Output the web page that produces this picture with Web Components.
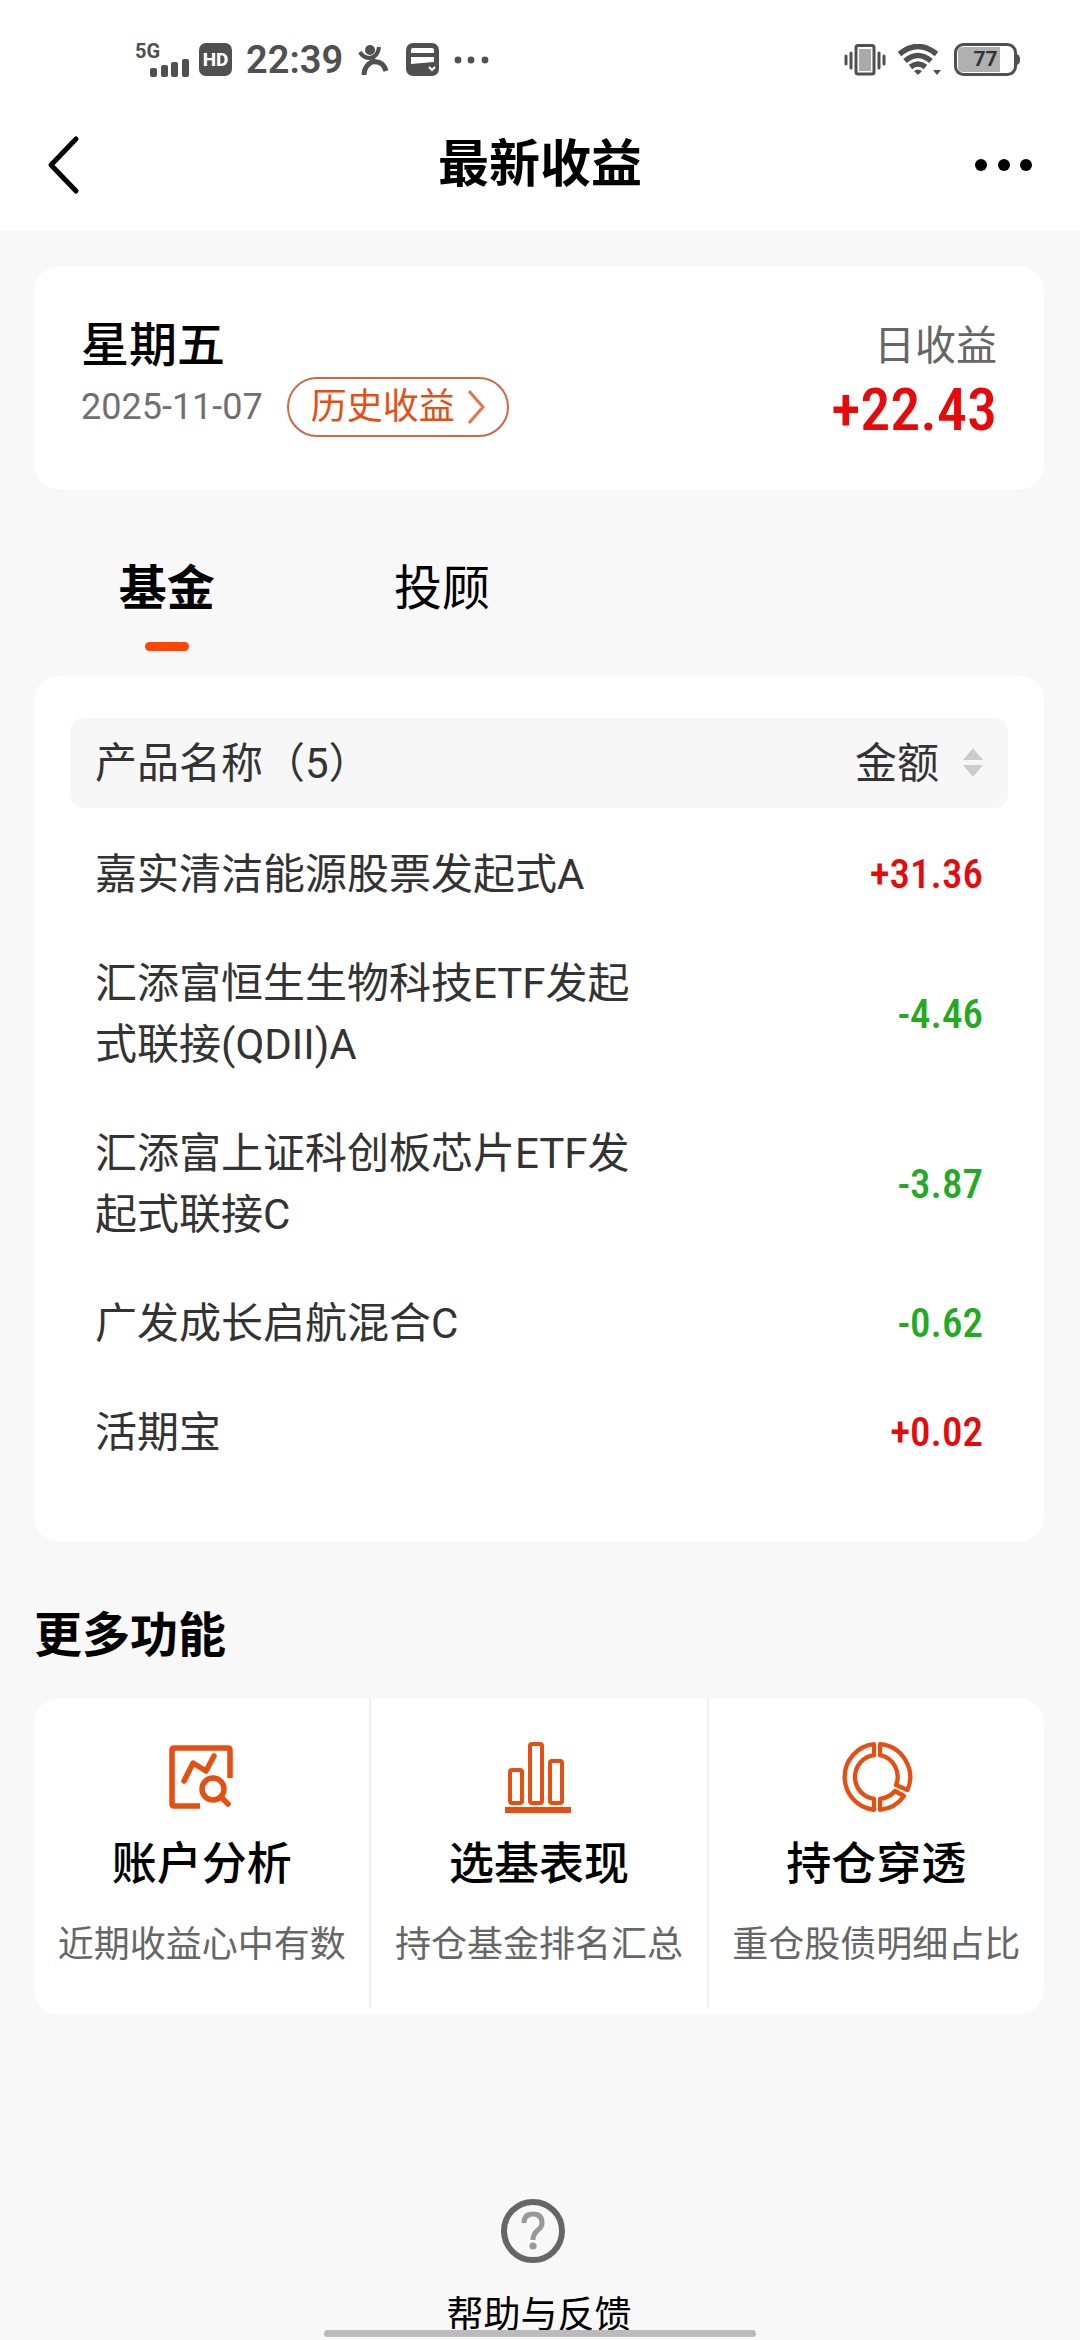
<!DOCTYPE html>
<html lang="zh-CN">
<head>
<meta charset="utf-8">
<meta name="viewport" content="width=device-width, initial-scale=1">
<title>最新收益</title>
<style>
  :root {
    --accent: #e64f12;
    --rise: #e60a0a;
    --fall: #22aa22;
    --ink: #000;
    --body: #333;
    --muted: #666;
    --page: #f8f8f8;
    --figures: "Roboto Condensed", Roboto, sans-serif;
  }
  * { box-sizing: border-box; }
  body {
    margin: 0;
    min-height: 100vh;
    background: var(--page);
    color: var(--ink);
    font-family: Roboto, "Noto Sans CJK SC", sans-serif;
  }
  main { padding: 36px 36px 0 34px; }
</style>
</head>
<body>
<status-bar time="22:39" battery="77"></status-bar>
<nav-bar>最新收益</nav-bar>
<main>
  <day-summary day="星期五" date="2025-11-07" amount="+22.43"></day-summary>
  <tab-strip tabs="基金,投顾"></tab-strip>
  <fund-table></fund-table>
  <feature-section>
    <span slot="title">更多功能</span>
    <feature-tile icon="analysis"><span slot="name">账户分析</span>近期收益心中有数</feature-tile>
    <feature-tile icon="bars"><span slot="name">选基表现</span>持仓基金排名汇总</feature-tile>
    <feature-tile icon="ring"><span slot="name">持仓穿透</span>重仓股债明细占比</feature-tile>
  </feature-section>
  <help-link>帮助与反馈</help-link>
</main>
<home-indicator></home-indicator>

<script>
const RESET = `
  *, *::before { box-sizing: border-box; }
  button { border: 0; padding: 0; margin: 0; background: none; font: inherit; color: inherit; cursor: pointer; }
  a { color: inherit; text-decoration: none; }
  h1, h2, p { margin: 0; }
  svg { display: block; flex: none; }
`;

class Base extends HTMLElement {
  connectedCallback() {
    if (this.shadowRoot) return;
    this.attachShadow({ mode: "open" }).innerHTML =
      `<style>${RESET}${this.styles()}</style>${this.markup()}`;
  }
}

customElements.define("status-bar", class extends Base {
  styles() { return `
    :host { display: flex; justify-content: space-between; align-items: center; height: 119px;
            padding: 0 59px 0 135px; background: #fff; color: #505050; }
    div { display: flex; align-items: center; }
    .net { position: relative; width: 54px; height: 34px; }
    .net span { position: absolute; left: 0; top: -2px; font-size: 20px; line-height: 20px; font-weight: 700; }
    .hd { width: 33px; height: 33px; margin-left: 10px; border-radius: 7px; background: #505050; color: #fff;
          font-size: 19px; line-height: 33px; font-weight: 800; text-align: center; }
    time { margin-left: 14px; font-size: 38px; line-height: 48px; font-weight: 600; }
    .runner { margin-left: 15px; }
    .card { margin-left: 16px; }
    .dots { margin-left: 15px; }
    .wifi { margin-left: 12px; }
    .battery { position: relative; margin-left: 12px; }
    .battery span { position: absolute; left: 0; right: 16px; top: 0; padding-left: 12px; text-align: center;
                    font-size: 21px; line-height: 32px; font-weight: 700; color: #333; }
  `; }
  markup() { return `
    <div>
      <div class="net"><span>5G</span>
        <svg width="54" height="34" fill="#505050"><rect x="15" y="25" width="7" height="9" rx="2"/><rect x="26" y="22" width="7" height="12" rx="2"/><rect x="36" y="19" width="7" height="15" rx="2"/><rect x="47" y="16" width="7" height="18" rx="2"/></svg>
      </div>
      <span class="hd">HD</span>
      <time>${this.getAttribute("time")}</time>
      <svg class="runner" width="32" height="32" fill="none" stroke="#505050" stroke-width="5">
        <circle cx="12" cy="6" r="5" fill="#505050" stroke="none"/>
        <path d="M2 8q3 6 10 6q8-1 9-11" stroke-width="4"/><path d="M12 13l4 4q-10 4-10 14M14 18q11-2 14 9"/>
      </svg>
      <svg class="card" width="33" height="33">
        <rect width="33" height="33" rx="7" fill="#505050"/>
        <path d="M5 10V7q0-2 2-2h19q2 0 2 2v3zM5 14h23v5L5 21z" fill="#fff"/>
        <path d="M23 24l3 3 3-3" fill="none" stroke="#fff" stroke-width="2"/>
      </svg>
      <svg class="dots" width="36" height="8" fill="#505050"><circle cx="4" cy="4" r="3.4"/><circle cx="17" cy="4" r="3.4"/><circle cx="31" cy="4" r="3.4"/></svg>
    </div>
    <div>
      <svg width="42" height="32" stroke="#505050" fill="none">
        <rect x="12" y="1.500" width="18" height="28.500" rx="2" stroke-width="3"/><rect x="15" y="5" width="12" height="22" fill="#aaa" stroke="none"/>
        <path d="M2 12v8M40 12v8" stroke-width="3" stroke-linecap="round"/><path d="M7 9v15M35 9v15" stroke-width="3" stroke-linecap="round"/>
      </svg>
      <svg class="wifi" width="44" height="32" fill="none" stroke="#505050" stroke-width="5.500">
        <path d="M1.500 10q18.500-15 37 0M7 17q13-11 26 0M12.500 23q7.500-6 15 0"/>
        <path d="M16 27q4-3 8 0l-4 4zM35 26h8l-4 5z" fill="#505050" stroke="none"/>
      </svg>
      <div class="battery">
        <svg width="67" height="33">
          <rect x="1.500" y="1.500" width="60" height="30" rx="8" fill="#fff" stroke="#505050" stroke-width="3"/>
          <path d="M9 4h37v25H9q-5 0-5-5V9q0-5 5-5z" fill="#b0b0b0"/><path d="M63 11q3 1 3 5.500t-3 5.500z" fill="#505050"/>
        </svg>
        <span>${this.getAttribute("battery")}</span>
      </div>
    </div>`; }
});

customElements.define("nav-bar", class extends Base {
  styles() { return `
    :host { display: flex; justify-content: space-between; align-items: center; height: 112px;
            padding: 0 47px 20px; background: #fff; }
    h1 { font-size: 51px; line-height: 64px; font-weight: 700; }
    button { display: flex; width: 60px; height: 64px; align-items: center; }
    .more { justify-content: flex-end; }
  `; }
  markup() { return `
    <button aria-label="返回"><svg width="34" height="60" fill="none" stroke="#000" stroke-width="5" stroke-linecap="round" stroke-linejoin="round"><path d="M29 4L4 30l25 26"/></svg></button>
    <h1><slot></slot></h1>
    <button class="more" aria-label="更多"><svg width="58" height="14"><circle cx="6" cy="7" r="6"/><circle cx="29" cy="7" r="6"/><circle cx="51" cy="7" r="6"/></svg></button>`; }
});

customElements.define("day-summary", class extends Base {
  styles() { return `
    :host { display: flex; justify-content: space-between; height: 222px; padding: 48px 47px 0;
            background: #fff; border-radius: 24px; }
    h2 { font-size: 48px; line-height: 62px; font-weight: 500; }
    .row { display: flex; align-items: center; gap: 24px; }
    .row time { font-size: 36px; line-height: 60px; color: #707070; }
    a { display: flex; align-items: center; gap: 12px; height: 60px; padding: 0 22px; border: 2px solid #cd6a42;
        border-radius: 30px; font-size: 36px; line-height: 56px; color: var(--accent); }
    .today { text-align: right; }
    .today p { font-size: 41px; line-height: 62px; color: var(--muted); }
    .today strong { display: block; font: 500 60px/66px var(--figures); color: var(--rise); }
  `; }
  markup() { return `
    <div>
      <h2>${this.getAttribute("day")}</h2>
      <div class="row"><time>${this.getAttribute("date")}</time>
        <a href="#history">历史收益<svg width="18" height="34" fill="none" stroke="#e8734a" stroke-width="3"><path d="M2 1l14 16L2 33"/></svg></a></div>
    </div>
    <div class="today"><p>日收益</p><strong>${this.getAttribute("amount")}</strong></div>`; }
});

customElements.define("tab-strip", class extends Base {
  styles() { return `
    :host { display: flex; height: 187px; margin: 0 -5px; padding-top: 69px; }
    button { display: flex; flex-direction: column; align-items: center; gap: 22px; width: 27%; height: 96px;
             font-size: 48px; line-height: 62px; }
    [aria-selected=true] { font-weight: 700; }
    [aria-selected=true]::after { content: ""; width: 44px; height: 9px; border-radius: 5px; background: #ff4500; }
  `; }
  markup() {
    return this.getAttribute("tabs").split(",").map((t, i) =>
      `<button role="tab" aria-selected="${i === 0}">${t}</button>`).join("");
  }
});

customElements.define("fund-table", class extends Base {
  rows = [
    ["嘉实清洁能源股票发起式A", "+31.36"],
    ["汇添富恒生生物科技ETF发起式联接(QDII)A", "-4.46"],
    ["汇添富上证科创板芯片ETF发起式联接C", "-3.87"],
    ["广发成长启航混合C", "-0.62"],
    ["活期宝", "+0.02"]
  ];
  styles() { return `
    :host { display: block; padding: 42px 36px 54px; background: #fff; border-radius: 24px; color: var(--body);
            font-size: 42px; line-height: 61px; }
    table { width: 100%; border-collapse: separate; border-spacing: 0; }
    th { height: 90px; padding: 0 25px; background: #f7f7f7; font-weight: 400; text-align: left; }
    th:first-child { width: 63%; border-radius: 14px 0 0 14px; }
    th:last-child { border-radius: 0 14px 14px 0; }
    th button { display: flex; align-items: center; gap: 24px; margin-left: auto; line-height: 61px; }
    td { padding: 24px 25px; }
    tbody tr:first-child td { padding-top: 36px; }
    td:last-child { text-align: right; font: 500 41px/61px var(--figures); }
    .rise { color: var(--rise); }
    .fall { color: var(--fall); }
  `; }
  markup() { return `
    <table>
      <thead><tr><th scope="col">产品名称（${this.rows.length}）</th>
        <th scope="col"><button>金额<svg width="20" height="30" fill="#ccc"><path d="M0 12L10 0l10 12zM0 17h20L10 29z"/></svg></button></th></tr></thead>
      <tbody>${this.rows.map(([name, amount]) =>
        `<tr><td>${name}</td><td class="${amount[0] === "+" ? "rise" : "fall"}">${amount}</td></tr>`).join("")}</tbody>
    </table>`; }
});

customElements.define("feature-section", class extends Base {
  styles() { return `
    :host { display: block; padding-top: 64px; }
    h2 { font-size: 48px; line-height: 62px; font-weight: 700; }
    .tiles { display: flex; margin-top: 32px; padding-bottom: 6px; background: #fff; border-radius: 24px; }
  `; }
  markup() { return `<h2><slot name="title"></slot></h2><div class="tiles"><slot></slot></div>`; }
});

const ICONS = {
  analysis: `<g stroke-width="5.500" stroke-linejoin="round"><path d="M65 38V10q0-2-2-2H9q-2 0-2 2v54q0 2 2 2h26"/><path d="M19 41l9-18 13 8 8-15" stroke-linecap="round"/><circle cx="48" cy="49" r="11"/><path d="M57 58l6 6" stroke-linecap="round"/></g>`,
  bars: `<g stroke-width="4"><rect x="8" y="30" width="12" height="33" rx="2"/><rect x="28" y="4" width="12" height="59" rx="2"/><rect x="48" y="21" width="12" height="42" rx="2"/></g><path d="M3 70h66" stroke-width="6"/>`,
  ring: `<g stroke-width="4.300" stroke-linejoin="round"><path d="M35 4.200A33 33 0 0 0 35 69.800V58.800A22 22 0 0 1 35 15.200z"/><path d="M41 4.200A33 33 0 0 1 68.500 50L57 45A22 22 0 0 0 41 15.200z"/><path d="M56 51L65 56A33 33 0 0 1 41 69.800V58.800A22 22 0 0 0 56 51z"/></g>`
};

customElements.define("feature-tile", class extends Base {
  styles() { return `
    :host { display: block; flex: 1; border-right: 2px solid #f0f0f0; }
    :host(:last-of-type) { border-right: 0; }
    button { display: flex; flex-direction: column; align-items: center; width: 100%; padding: 41px 0 37px; }
    strong { margin-top: 20px; font-size: 45px; line-height: 60px; font-weight: 500; }
    p { margin-top: 24px; font-size: 36px; line-height: 52px; color: var(--muted); white-space: nowrap; }
  `; }
  markup() { return `
    <button>
      <svg width="74" height="75" viewBox="0 0 74 75" fill="none" stroke="#e64f12">${ICONS[this.getAttribute("icon")]}</svg>
      <strong><slot name="name"></slot></strong><p><slot></slot></p>
    </button>`; }
});

customElements.define("help-link", class extends Base {
  styles() { return `
    :host { display: flex; justify-content: center; padding-top: 184px; }
    a { display: flex; flex-direction: column; align-items: center; gap: 28px; font-size: 37px; line-height: 48px; }
  `; }
  markup() { return `
    <a href="#help"><svg width="76" height="66" fill="none"><circle cx="32" cy="33" r="29" stroke="#666" stroke-width="6"/><path d="M23 25Q23 16 32 16T41 25Q41 29 37 32Q32 36 32 42" stroke="#999" stroke-width="5"/><circle cx="32" cy="48" r="3.600" fill="#999"/></svg>
    <slot></slot></a>`; }
});

customElements.define("home-indicator", class extends Base {
  styles() { return `
    :host { position: fixed; left: 30%; right: 30%; bottom: 3px; height: 7px; border-radius: 4px; background: #bbb; }
  `; }
  markup() { return ""; }
});
</script>
</body>
</html>
